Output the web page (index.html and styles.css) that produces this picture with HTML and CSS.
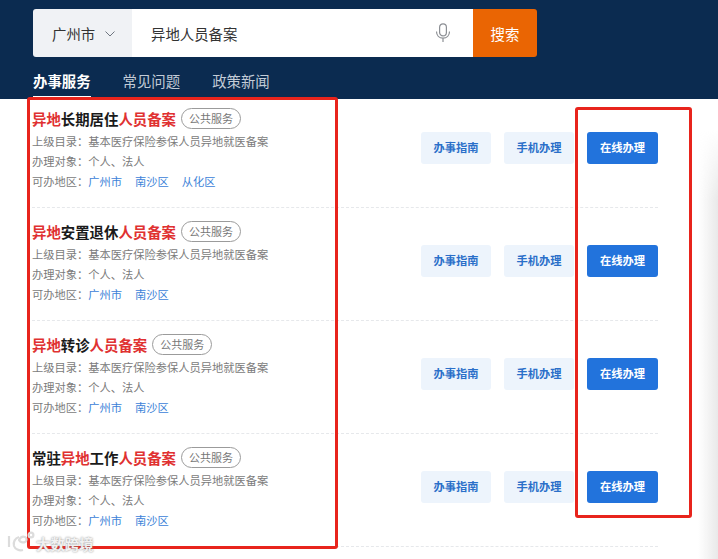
FILE: index.html
```html
<!DOCTYPE html>
<html lang="zh-CN">
<head>
<meta charset="utf-8">
<title>异地人员备案</title>
<link rel="stylesheet" href="styles.css">
</head>
<body>
<header class="header">
  <div class="search">
    <div class="city">广州市
      <svg class="chev" width="10" height="6" viewBox="0 0 10 6"><path d="M.5.5l4.500 4.500 4.500-4.500" fill="none" stroke="#6f7680" stroke-width="1"/></svg>
    </div>
    <div class="field">
      <span class="query">异地人员备案</span>
      <svg class="mic" width="16" height="20" viewBox="0 0 16 20" fill="none" stroke="#8c8f94" stroke-width="1.2"><rect x="4.600" y="0.800" width="6.800" height="12" rx="3.400"/><path d="M1.500 8.500c0 4 2.800 6.600 6.500 6.600s6.500-2.600 6.500-6.600M8 15v4"/></svg>
    </div>
    <button class="go">搜索</button>
  </div>
  <nav class="tabs">
    <a class="tab on">办事服务</a>
    <a class="tab">常见问题</a>
    <a class="tab">政策新闻</a>
  </nav>
</header>
<main class="list">
  <article class="row first">
    <div class="info">
      <h3 class="title"><em>异地</em>长期居住<em>人员备案</em><span class="tag">公共服务</span></h3>
      <p class="line">上级目录：基本医疗保险参保人员异地就医备案</p>
      <p class="line">办理对象：个人、法人</p>
      <p class="line">可办地区：<a>广州市</a><a>南沙区</a><a>从化区</a></p>
    </div>
    <div class="acts"><button class="btn">办事指南</button><button class="btn">手机办理</button><button class="btn main">在线办理</button></div>
  </article>
  <article class="row">
    <div class="info">
      <h3 class="title"><em>异地</em>安置退休<em>人员备案</em><span class="tag">公共服务</span></h3>
      <p class="line">上级目录：基本医疗保险参保人员异地就医备案</p>
      <p class="line">办理对象：个人、法人</p>
      <p class="line">可办地区：<a>广州市</a><a>南沙区</a></p>
    </div>
    <div class="acts"><button class="btn">办事指南</button><button class="btn">手机办理</button><button class="btn main">在线办理</button></div>
  </article>
  <article class="row">
    <div class="info">
      <h3 class="title"><em>异地</em>转诊<em>人员备案</em><span class="tag">公共服务</span></h3>
      <p class="line">上级目录：基本医疗保险参保人员异地就医备案</p>
      <p class="line">办理对象：个人、法人</p>
      <p class="line">可办地区：<a>广州市</a><a>南沙区</a></p>
    </div>
    <div class="acts"><button class="btn">办事指南</button><button class="btn">手机办理</button><button class="btn main">在线办理</button></div>
  </article>
  <article class="row">
    <div class="info">
      <h3 class="title">常驻<em>异地</em>工作<em>人员备案</em><span class="tag">公共服务</span></h3>
      <p class="line">上级目录：基本医疗保险参保人员异地就医备案</p>
      <p class="line">办理对象：个人、法人</p>
      <p class="line">可办地区：<a>广州市</a><a>南沙区</a></p>
    </div>
    <div class="acts"><button class="btn">办事指南</button><button class="btn">手机办理</button><button class="btn main">在线办理</button></div>
  </article>
</main>
<div class="shade"></div>
<div class="mark mark-left"></div>
<div class="mark mark-right"></div>
<div class="wm">
  <svg width="28" height="24" viewBox="0 0 28 24" fill="none" stroke="#dcdcdc" stroke-width="2.200"><path d="M2 5v11"/><path d="M12 6c-4 1-6 5-5 9 1 3 5 5 9 4"/><path d="M12 9c1-2 3-4 6-3 2 1 2 4 0 5s-5 0-6-2z"/><circle cx="24" cy="4" r="2.400"/></svg>
  <span>大数跨境</span>
</div>
</body>
</html>
```
FILE: styles.css
```css
* { box-sizing: border-box; }
html, body { margin: 0; padding: 0; }
body {
  width: 718px;
  height: 559px;
  overflow: hidden;
  position: relative;
  background: #fff;
  font-family: "Noto Sans CJK SC", "Noto Sans", sans-serif;
}
.header {
  height: 99px;
  background: #0b2b50;
  padding: 9px 0 0 33px;
}
.search {
  display: flex;
  width: 504px;
  height: 48px;
  border-radius: 3px;
  overflow: hidden;
}
.city {
  width: 99px;
  background: #f0f2f5;
  display: flex;
  align-items: center;
  padding-left: 19px;
  gap: 10px;
  font-size: 14.4px;
  color: #333;
}
.chev { margin-top: 2px; }
.field {
  flex: 1;
  background: #fff;
  display: flex;
  align-items: center;
  justify-content: space-between;
  padding: 0 22px 0 19px;
  font-size: 14.4px;
  color: #333;
}
.go {
  width: 64px;
  border: 0;
  padding: 0;
  background: #ea6503;
  color: #fff;
  font: inherit;
  font-size: 14.4px;
}
.tabs {
  display: flex;
  gap: 32px;
  margin-top: 13px;
}
.tab {
  font-size: 14.4px;
  line-height: 21px;
  height: 27px;
  color: #c3ccd7;
}
.tab.on {
  color: #fff;
  font-weight: 700;
  border-bottom: 1px solid #fff;
}
.list { padding: 0 60px 0 32px; }
.row {
  height: 113px;
  padding-top: 11px;
  display: flex;
  justify-content: space-between;
  align-items: flex-start;
  border-bottom: 1px dashed #e6e8eb;
}
.row.first {
  height: 109px;
  padding-top: 7px;
}
.info { width: 330px; }
.title {
  margin: 0 0 1px;
  display: flex;
  align-items: center;
  height: 24px;
  font-size: 14.4px;
  font-weight: 700;
  color: #1a1a1a;
}
.title em { font-style: normal; color: #e03131; }
.tag {
  margin-left: 5px;
  height: 21px;
  line-height: 19px;
  padding: 0 7px;
  border: 1px solid #9b9b9b;
  border-radius: 11px;
  font-size: 11px;
  font-weight: 400;
  color: #777;
}
.line {
  margin: 0;
  height: 20px;
  line-height: 20px;
  font-size: 11.25px;
  color: #7b7b7b;
  white-space: nowrap;
}
.line a { color: #3c82d8; margin-right: 13px; }
.acts { display: flex; gap: 13px; margin-top: 26px; }
.btn {
  width: 70px;
  height: 32px;
  border: 0;
  border-radius: 3px;
  padding: 0 0 2px;
  background: #edf4fc;
  color: #2a6fc9;
  font: inherit;
  font-size: 11.25px;
  font-weight: 700;
}
.btn.main { width: 71px; background: #2273dc; color: #fff; }
.shade {
  position: absolute;
  right: 0;
  top: 130px;
  bottom: 0;
  width: 20px;
  background: linear-gradient(to right, rgba(235,235,235,0), #e9e9e9);
  -webkit-mask-image: linear-gradient(to bottom, transparent, #000 70px);
  mask-image: linear-gradient(to bottom, transparent, #000 70px);
}
.mark {
  position: absolute;
  border: 3px solid #e8241c;
  border-radius: 3px;
}
.mark-left { left: 27px; top: 97px; width: 311px; height: 452px; }
.mark-right { left: 575px; top: 107px; width: 117px; height: 411px; }
.wm {
  position: absolute;
  left: 7px;
  top: 531px;
  display: flex;
  align-items: center;
  gap: 1px;
  color: #f1f1f1;
  font-size: 14.4px;
  font-weight: 700;
  text-shadow: 0 0 2px #8a8a8a;
}
```
